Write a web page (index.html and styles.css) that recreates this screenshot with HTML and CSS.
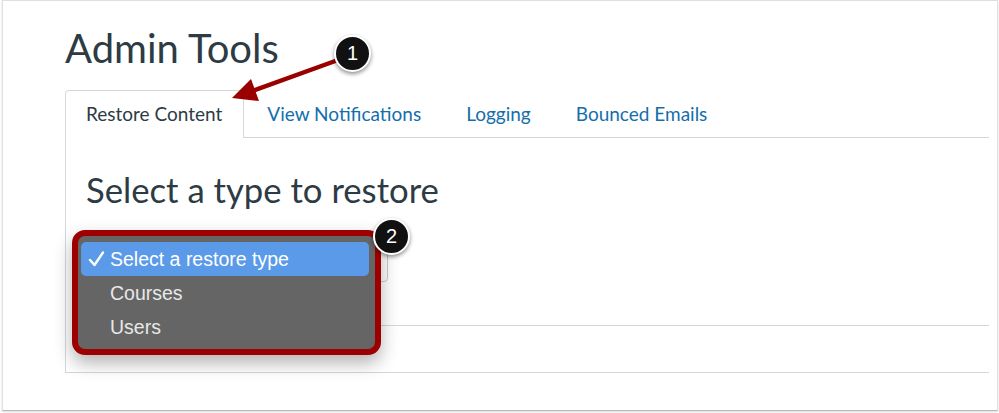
FILE: index.html
```html
<!DOCTYPE html>
<html lang="en">
<head>
    <meta charset="UTF-8">
    <meta name="viewport" content="width=device-width, initial-scale=1.0">
    <title>Admin Tools</title>
    <link rel="stylesheet" href="styles.css">
</head>
<body>
    <div class="frame">
        <h1 class="page-title">Admin Tools</h1>

        <ul class="tab-list">
            <li class="tab active">Restore Content</li>
            <li class="tab"><a href="#">View Notifications</a></li>
            <li class="tab"><a href="#">Logging</a></li>
            <li class="tab"><a href="#">Bounced Emails</a></li>
        </ul>

        <div class="tab-panel">
            <h2 class="panel-title">Select a type to restore</h2>
            <div class="restore-row">
                <div class="select-box"></div>
            </div>
            <div class="form-actions"></div>
        </div>
    </div>

    <!-- native popup menu of the select, opened -->
    <div class="popup">
        <div class="popup-item selected">
            <svg class="check" width="18" height="18" viewBox="0 0 18 18">
                <path d="M2 10 L6.5 15 L15 2.5" fill="none" stroke="#ffffff" stroke-width="2.4" stroke-linecap="round" stroke-linejoin="round"/>
            </svg>
            Select a restore type
        </div>
        <div class="popup-item">Courses</div>
        <div class="popup-item">Users</div>
    </div>

    <!-- callouts -->
    <svg class="arrow" width="999" height="413" viewBox="0 0 999 413">
        <line x1="338" y1="60" x2="252" y2="91" stroke="#9a0000" stroke-width="4.5" stroke-linecap="round"/>
        <polygon points="232,98 251,79 259,101" fill="#9a0000"/>
    </svg>
    <div class="badge badge-1">1</div>
    <div class="badge badge-2">2</div>
</body>
</html>
```

FILE: styles.css
```css
body {
    margin: 0;
    background-color: #ffffff;
    font-family: Lato, "Open Sans", sans-serif;
    color: #2d3b45;
    position: relative;
    width: 999px;
    height: 413px;
    overflow: hidden;
}
.frame {
    margin: 0 1px 0 2px;
    height: 411px;
    box-sizing: border-box;
    border: 1px solid #e0e0e0;
    border-bottom-color: #b9b9b9;
    box-shadow: 0 1px 2px rgba(0, 0, 0, 0.15);
    padding: 0 8px 0 62px;
}
.page-title {
    margin: 0;
    padding-top: 23px;
    font-size: 40px;
    font-weight: 400;
    line-height: 48px;
}
.tab-list {
    list-style: none;
    margin: 18px 0 0 0;
    padding: 0;
    display: flex;
    border-bottom: 1px solid #d4d8db;
    height: 47px;
}
.tab {
    padding: 0 21px 0 20px;
    margin-right: 2px;
    font-size: 19px;
    line-height: 46px;
    border: 1px solid transparent;
    border-bottom: none;
}
.tab a {
    color: #136fab;
    text-decoration: none;
}
.tab.active {
    background-color: #ffffff;
    border-color: #d4d8db;
    border-radius: 4px 4px 0 0;
    height: 47px;
}
.tab-panel {
    border-left: 1px solid #d4d8db;
    border-bottom: 1px solid #d4d8db;
    padding: 0 0 46px 20px;
}
.panel-title {
    margin: 0;
    padding-top: 31px;
    font-size: 34.7px;
    font-weight: 400;
    line-height: 42px;
}
.restore-row {
    padding-top: 33px;
    height: 81px;
}
.select-box {
    width: 302px;
    height: 38px;
    box-sizing: border-box;
    border: 1px solid #c7cdd1;
    border-radius: 4px;
}
.form-actions {
    border-top: 1px solid #d4d8db;
}

.popup {
    position: absolute;
    left: 72px;
    top: 230px;
    width: 309px;
    height: 125px;
    box-sizing: border-box;
    border: 6px solid #9c0000;
    border-radius: 13px;
    background-color: #656565;
    padding: 6px 6px 5px 3px;
    box-shadow: 0 8px 18px rgba(0, 0, 0, 0.3);
    font-family: "Liberation Sans", Arial, sans-serif;
    font-size: 19.5px;
    color: #e8e8e8;
}
.popup-item {
    height: 34px;
    line-height: 34px;
    padding-left: 29px;
    position: relative;
    border-radius: 5px;
}
.popup-item.selected {
    background-color: #5a9ae8;
    color: #ffffff;
}
.check {
    position: absolute;
    left: 7px;
    top: 8px;
}

.arrow {
    position: absolute;
    left: 0;
    top: 0;
    pointer-events: none;
}
.badge {
    position: absolute;
    width: 33px;
    height: 33px;
    border-radius: 50%;
    background-color: #111111;
    border: 2px solid #ffffff;
    box-shadow: 0 2px 4px rgba(0, 0, 0, 0.45);
    color: #ffffff;
    font-family: "Liberation Sans", Arial, sans-serif;
    font-size: 20px;
    line-height: 33px;
    text-align: center;
}
.badge-1 {
    left: 334px;
    top: 35px;
}
.badge-2 {
    left: 373px;
    top: 218px;
}
```
